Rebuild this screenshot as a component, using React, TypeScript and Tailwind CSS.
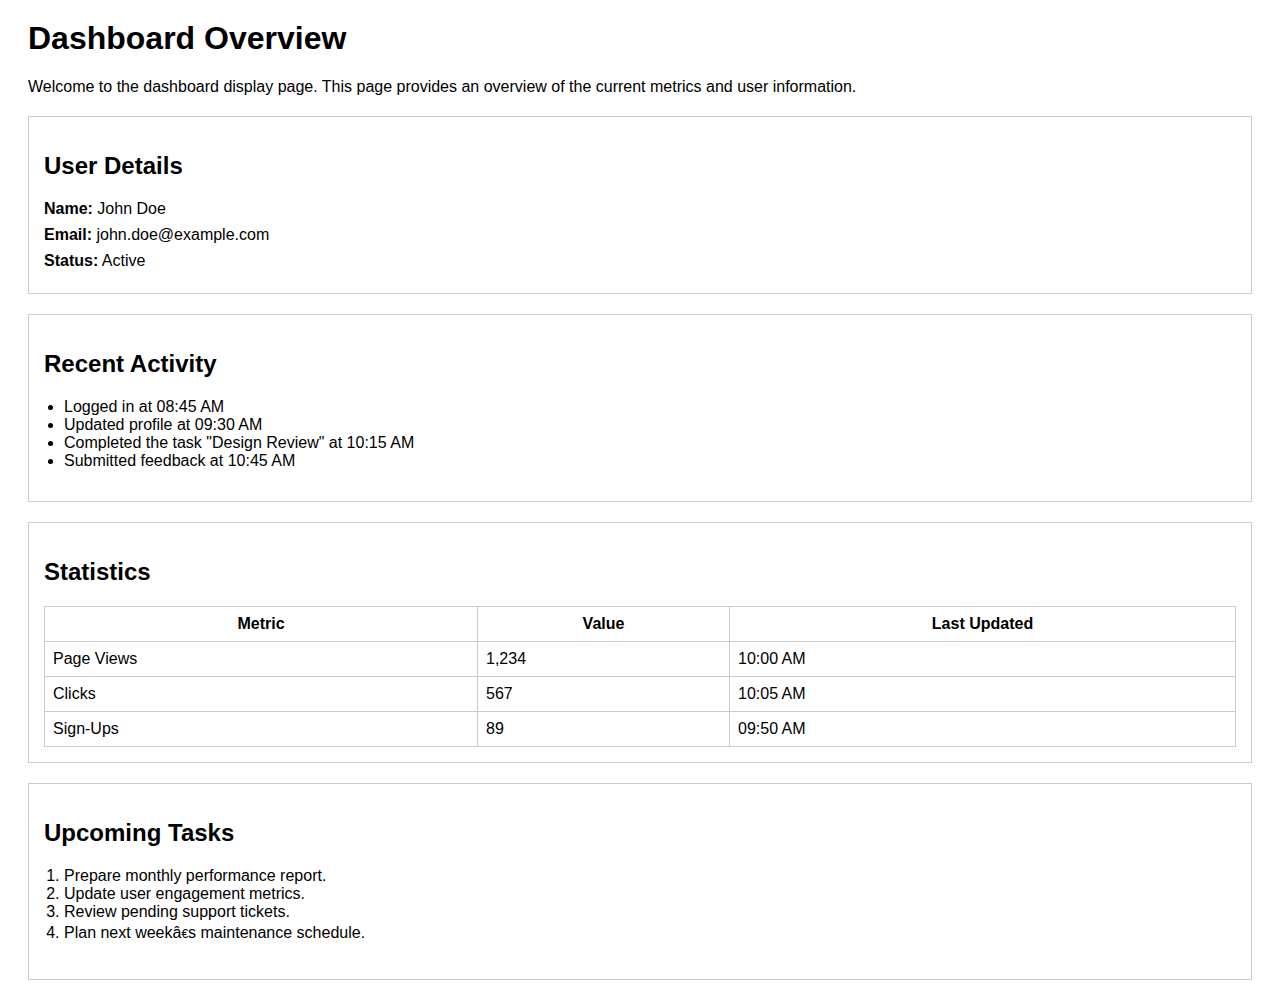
const stats = [
  { metric: "Page Views", value: "1,234", updated: "10:00 AM" },
  { metric: "Clicks", value: "567", updated: "10:05 AM" },
  { metric: "Sign-Ups", value: "89", updated: "09:50 AM" },
];

const activity = [
  "Logged in at 08:45 AM",
  "Updated profile at 09:30 AM",
  'Completed the task "Design Review" at 10:15 AM',
  "Submitted feedback at 10:45 AM",
];

const tasks = [
  "Prepare monthly performance report.",
  "Update user engagement metrics.",
  "Review pending support tickets.",
];

function Section({ title, children }: { title: string; children: React.ReactNode }) {
  return (
    <section className="my-5 border border-[#cccccc] px-[15px] py-[15px]">
      <h2 className="my-[19.92px] text-[24px] font-bold leading-[normal]">{title}</h2>
      {children}
    </section>
  );
}

export default function App() {
  return (
    <div className="min-h-screen bg-white px-[28px] pt-[20px] pb-5 font-['Liberation_Sans',Arial,sans-serif] text-[16px] leading-[normal] text-black">
      <h1 className="mt-0 mb-[21.44px] text-[32px] font-bold leading-[normal]">Dashboard Overview</h1>
      <p className="my-4">
        Welcome to the dashboard display page. This page provides an overview of the current metrics and user
        information.
      </p>

      <Section title="User Details">
        <p className="my-2">
          <strong>Name:</strong> John Doe
        </p>
        <p className="my-2">
          <strong>Email:</strong> john.doe@example.com
        </p>
        <p className="my-2">
          <strong>Status:</strong> Active
        </p>
      </Section>

      <Section title="Recent Activity">
        <ul className="my-4 list-disc pl-5">
          {activity.map((item) => (
            <li key={item}>{item}</li>
          ))}
        </ul>
      </Section>

      <Section title="Statistics">
        <table className="w-full border-collapse">
          <thead>
            <tr>
              <th className="w-[433px] border border-[#cccccc] p-2 text-center font-bold">Metric</th>
              <th className="w-[252px] border border-[#cccccc] p-2 text-center font-bold">Value</th>
              <th className="border border-[#cccccc] p-2 text-center font-bold">Last Updated</th>
            </tr>
          </thead>
          <tbody>
            {stats.map((row) => (
              <tr key={row.metric}>
                <td className="border border-[#cccccc] p-2 text-left">{row.metric}</td>
                <td className="border border-[#cccccc] p-2 text-left">{row.value}</td>
                <td className="border border-[#cccccc] p-2 text-left">{row.updated}</td>
              </tr>
            ))}
          </tbody>
        </table>
      </Section>

      <Section title="Upcoming Tasks">
        <ol className="my-4 list-decimal pl-5">
          {tasks.map((item) => (
            <li key={item}>{item}</li>
          ))}
          <li className="pt-[3px] pb-[6px]">
            Plan next week&acirc;<span className="text-[12px]">&euro;</span>s maintenance schedule.
          </li>
        </ol>
      </Section>
    </div>
  );
}
